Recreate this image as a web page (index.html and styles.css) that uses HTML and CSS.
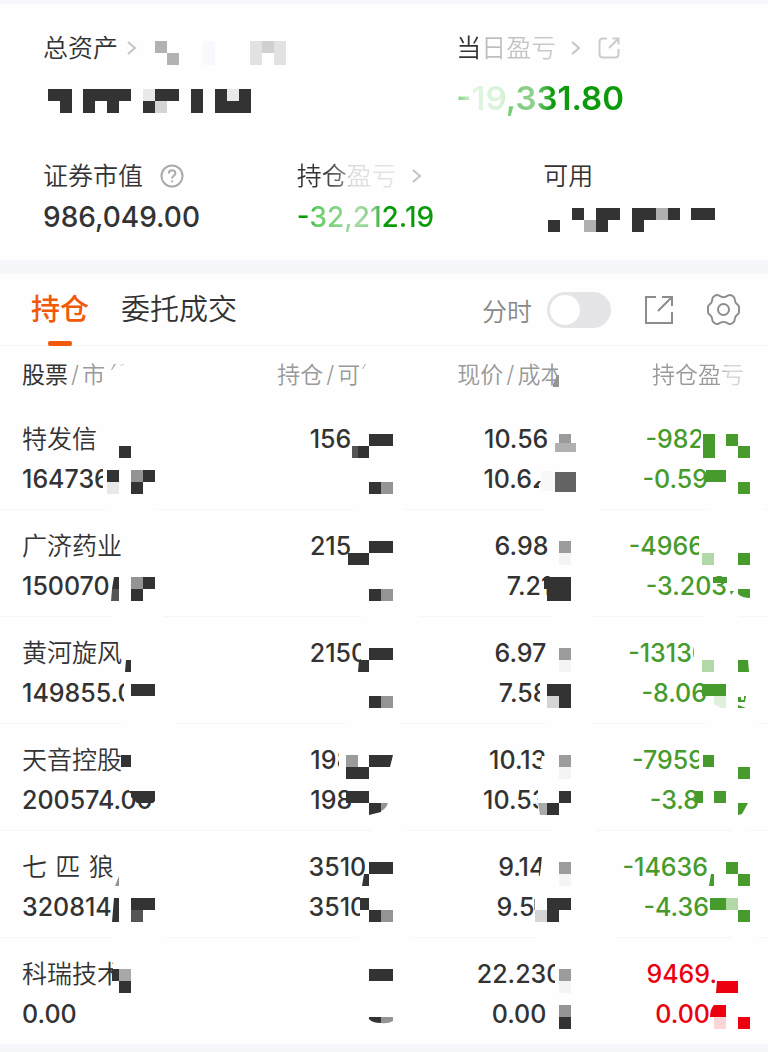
FILE: index.html
```html
<!DOCTYPE html>
<html lang="zh-CN">
<head>
    <meta charset="UTF-8">
    <meta name="viewport" content="width=device-width, initial-scale=1.0">
    <title>持仓</title>
    <link rel="stylesheet" href="styles.css">
</head>
<body>
    <section class="summary">
        <div class="summary-top">
            <div>
                <div class="label">
                    <a href="#">总资产</a>
                    <svg class="arrow" width="8" height="16" viewBox="0 0 8 16"><path d="M0 2l7 6-7 6"/></svg>
                    <svg class="mosaic" width="132" height="30" viewBox="0 0 132 30">
                        <path fill="#b2b2b2" d="M1 8h12v12h12v12h-12v-12h-12z"/>
                        <path fill="#f8f9fd" d="M49 8h12v24h-12z"/>
                        <path fill="#e2e2e2" d="M96 8h36v24h-12v-12h-12v12h-12z"/>
                        <path fill="#d0d0d0" d="M108 8h12v12h-12z"/>
                    </svg>
                </div>
                <div class="value big">
                    <svg class="mosaic" width="208" height="36" viewBox="0 0 208 36">
                        <path class="d" d="M5 9h24v24h-12v-12h-12zM40 9h48v12h-12v12h-12v-12h-12v12h-12zM112 9h24v12h-24zM100 21h12v12h-12zM148 9h12v24h-12zM172 9h12v12h12v-12h12v24h-36z"/>
                        <path class="x" d="M100 9h12v12h-12zM184 9h12v12h-12z"/>
                        <path class="s" d="M112 21h12v12h-12z"/>
                    </svg>
                </div>
            </div>
            <div>
                <div class="label">
                    <a href="#" class="fade-day">当日盈亏</a>
                    <svg class="arrow far" width="8" height="16" viewBox="0 0 8 16"><path d="M0 2l7 6-7 6"/></svg>
                    <button class="icon" aria-label="分享当日盈亏">
                        <svg class="share-small" width="22" height="22" viewBox="0 0 22 22"><path d="M9 1.500H5Q1.500 1.500 1.500 5v12q0 3.500 3.500 3.500h12q3.500 0 3.500-3.500v-5M14.500 1.500h6v6M20 2l-9 9"/></svg>
                    </button>
                </div>
                <div class="value big fade-day-value">-19,331.80</div>
            </div>
        </div>
        <div class="summary-bottom">
            <div>
                <div class="label">
                    <span>证券市值</span>
                    <button class="icon help" aria-label="说明">
                        <svg width="24" height="24" viewBox="0 0 24 24"><circle cx="12" cy="12" r="10.500"/><path d="M8.800 9.500c0-4.300 6.600-4.300 6.600-.3 0 2.500-3.300 2.600-3.300 5.200M12.100 16.500v1.800"/></svg>
                    </button>
                </div>
                <div class="value">986,049.00</div>
            </div>
            <div>
                <div class="label">
                    <a href="#" class="fade-hold">持仓盈亏</a>
                    <svg class="arrow far" width="8" height="16" viewBox="0 0 8 16"><path d="M0 2l7 6-7 6"/></svg>
                </div>
                <div class="value fade-hold-value">-32,212.19</div>
            </div>
            <div>
                <div class="label"><span>可用</span></div>
                <div class="value">
                    <svg class="mosaic" width="174" height="36" viewBox="0 0 174 36">
                        <path class="d" d="M5 21h12v12h-12zM29 9h12v12h-12zM53 9h24v12h-12v12h-12zM89 9h24v12h-12v12h-12zM125 9h12v12h-12zM148 9h24v12h-24z"/>
                        <path fill="#b0b0b0" d="M41 21h12v12h-12zM113 9h12v12h-12z"/>
                    </svg>
                </div>
            </div>
        </div>
    </section>

    <nav class="tabs">
        <a href="#" class="tab active">持仓</a>
        <a href="#" class="tab">委托成交</a>
        <label class="minute" for="minute">分时</label>
        <input type="checkbox" id="minute" class="switch">
        <button class="icon share" aria-label="分享">
            <svg width="30" height="30" viewBox="0 0 30 30"><path d="M12 2H2v26h26V17M18 2h10v9M27 3L14 16"/></svg>
        </button>
        <button class="icon gear" aria-label="设置">
            <svg width="33" height="33" viewBox="0 0 34 34"><circle cx="17" cy="17" r="5.700"/><path d="M14 3.500Q17 5 20 3.500L22 2.400Q24 1.400 26 2.800L27.500 4Q28.600 5 28.600 7Q28.800 10 31 11.500L32 12.300Q33 13 33 15V19Q33 21 32 21.700L31 22.500Q28.800 24 28.600 27Q28.600 29 27.500 30L26 31.200Q24 32.600 22 31.600L20 30.500Q17 29 14 30.500L12 31.600Q10 32.600 8 31.200L6.500 30Q5.400 29 5.400 27Q5.200 24 3 22.500L2 21.700Q1 21 1 19V15Q1 13 2 12.300L3 11.500Q5.200 10 5.400 7Q5.400 5 6.500 4L8 2.800Q10 1.400 12 2.400Z"/></svg>
        </button>
    </nav>

    <table class="holdings">
        <thead>
            <tr>
                <th><div class="line"><b>股票</b><i>/</i>市<svg class="mosaic" width="48" height="40" viewBox="-48 0 48 40"><path class="w" d="M-52 20h6v14h-6z"/><path fill="#aaa" d="M-41 9l-3 6 1 0 4-6zM-32 9l-3 2h1l3-2z"/></svg></div></th>
                <th><div class="line">持仓<i>/</i>可<svg class="mosaic" width="33" height="40" viewBox="-33 0 33 40"><path class="w" d="M-34 20h8v14h-8z"/><path fill="#aaa" d="M-28 9l-3 5h1l3-5z"/></svg></div></th>
                <th><div class="line">现价<i>/</i>成本<svg class="mosaic" width="8" height="40" viewBox="-8 0 8 40"><path class="w" d="M-13 0h14v40h-14z"/><path fill="#949494" d="M-18 29l4-9h2v12h-6z"/></svg></div></th>
                <th><div class="line"><span class="fade-head">持仓盈亏</span><svg class="mosaic" width="6" height="40" viewBox="-6 0 6 40"></svg></div></th>
            </tr>
        </thead>
        <tbody>
            <tr>
                <td>
                    <div class="line name">特发信<svg class="mosaic" width="48" height="40" viewBox="-48 0 48 40"><path class="d" d="M-36 28h12v12h-12z"/></svg></div>
                    <div class="line">164736<svg class="mosaic" width="48" height="40" viewBox="-48 0 48 40"><path class="w" d="M-52 4h12v32h-12zM-49 50h49v4h-49z"/><path class="d" d="M-48 12h12v12h-12zM-12 12h12v12h-12zM-24 24h12v12h-12z"/><path class="x" d="M-48 24h12v12h-12z"/><path class="m" d="M-24 12h12v12h-12z"/></svg></div>
                </td>
                <td>
                    <div class="line">156<svg class="mosaic" width="42" height="40" viewBox="-42 0 42 40"><path class="d" d="M-24 16h24v12h-24zM-35 28h11v12h-11z"/><path class="k" d="M-41 28h6v12h-6z"/></svg></div>
                    <div class="line"><svg class="mosaic" width="24" height="40" viewBox="-24 0 24 40"><path class="w" d="M-40 50h51v4h-51z"/><path class="d" d="M-24 24h12v12h-12z"/><path class="m" d="M-12 24h12v12h-12z"/></svg></div>
                </td>
                <td>
                    <div class="line">10.56<svg class="mosaic" width="23" height="40" viewBox="-23 0 23 40"><path fill="#9b9b9b" d="M-12 16h12v9h-12z"/><path fill="#b0b0b0" d="M-16 25h21v9h-21z"/></svg></div>
                    <div class="line">10.62<svg class="mosaic" width="24" height="40" viewBox="-24 0 24 40"><path class="w" d="M-38 4h16v32h-10v-10l2-3h-8zM-28 50h57v4h-57z"/><path fill="#f8f8f8" d="M-30 13h14v20h-14z"/><path fill="#636363" d="M-16 14h21v20h-21z"/></svg></div>
                </td>
                <td class="down">
                    <div class="line">-982<svg class="mosaic" width="46" height="40" viewBox="-46 0 46 40"><path class="w" d="M-49 4h6v32h-8l2-14z"/><path class="d" d="M-47 16h12v24h-12zM-24 16h12v12h12v12h-12v-12h-12z"/></svg></div>
                    <div class="line">-0.59<svg class="mosaic" width="42" height="40" viewBox="-42 0 42 40"><path class="w" d="M-41 50h55v4h-55z"/><path class="d" d="M-44 12h20v12h-20zM-12 24h12v12h-12z"/></svg></div>
                </td>
            </tr>
            <tr>
                <td>
                    <div class="line name">广济药业</div>
                    <div class="line">150070<svg class="mosaic" width="48" height="40" viewBox="-48 0 48 40"><path class="w" d="M-45 50h54v4h-54z"/><path class="d" d="M-41 12h5v12h-7zM-12 12h12v12h-12zM-24 24h12v12h-12z"/><path class="k" d="M-43 24h7v12h-8z"/><path class="m" d="M-24 12h12v12h-12z"/></svg></div>
                </td>
                <td>
                    <div class="line">215<svg class="mosaic" width="42" height="40" viewBox="-42 0 42 40"><path class="d" d="M-24 16h24v12h-24zM-45 28h21v12h-21z"/></svg></div>
                    <div class="line"><svg class="mosaic" width="24" height="40" viewBox="-24 0 24 40"><path class="w" d="M-32 50h58v4h-58z"/><path class="d" d="M-24 24h12v12h-12z"/><path class="m" d="M-12 24h12v12h-12z"/></svg></div>
                </td>
                <td>
                    <div class="line">6.98<svg class="mosaic" width="23" height="40" viewBox="-23 0 23 40"><path class="g" d="M-12 16h12v12h-12z"/><path class="l" d="M-12 28h12v12h-12z"/></svg></div>
                    <div class="line">7.21<svg class="mosaic" width="20" height="40" viewBox="-20 0 20 40"><path class="w" d="M-20 50h41v4h-41z"/><path class="d" d="M-27 12h27v24h-24v-12h-3z"/></svg></div>
                </td>
                <td class="down">
                    <div class="line">-4966<svg class="mosaic" width="46" height="40" viewBox="-46 0 46 40"><path class="w" d="M-51 4h10v32h-10z"/><path class="p" d="M-48 28h12v12h-12z"/><path class="d" d="M-12 28h12v12h-12z"/></svg></div>
                    <div class="line">-3.203<svg class="mosaic" width="23" height="40" viewBox="-23 0 23 40"><path class="w" d="M-48 50h37v4h-37z"/><path class="d" d="M-37 12h14v6h-14zM-20 26h4l-3 4zM-12 24h12v9q-8 0-12-4z"/></svg></div>
                </td>
            </tr>
            <tr>
                <td>
                    <div class="line name">黄河旋风<svg class="mosaic" width="48" height="40" viewBox="-48 0 48 40"><path class="w" d="M-36 4h6v14h-6z"/><path class="d" d="M-29 28h5v12h-6z"/></svg></div>
                    <div class="line">149855.0<svg class="mosaic" width="48" height="40" viewBox="-48 0 48 40"><path class="w" d="M-31 4h16v32h-16zM-33 50h54v4h-54z"/><path class="d" d="M-24 12h24v12h-24z"/></svg></div>
                </td>
                <td>
                    <div class="line">2150<svg class="mosaic" width="26" height="40" viewBox="-26 0 26 40"><path class="w" d="M-32 4h7v32h-7z"/><path class="d" d="M-24 16h24v12h-24zM-34 28h10v12h-11z"/></svg></div>
                    <div class="line"><svg class="mosaic" width="24" height="40" viewBox="-24 0 24 40"><path class="w" d="M-47 50h54v4h-54z"/><path class="d" d="M-24 24h12v12h-12z"/><path class="m" d="M-12 24h12v12h-12z"/></svg></div>
                </td>
                <td>
                    <div class="line">6.97<svg class="mosaic" width="25" height="40" viewBox="-25 0 25 40"><path class="g" d="M-12 16h12v12h-12z"/><path class="l" d="M-12 28h12v12h-12z"/></svg></div>
                    <div class="line">7.58<svg class="mosaic" width="23" height="40" viewBox="-23 0 23 40"><path class="w" d="M-31 4h9v32h-9zM-25 50h46v4h-46z"/><path class="d" d="M-24 12h24v24h-12v-12h-12z"/><path class="s" d="M-24 24h12v12h-12z"/></svg></div>
                </td>
                <td class="down">
                    <div class="line">-13130<svg class="mosaic" width="42" height="40" viewBox="-42 0 42 40"><path class="w" d="M-56 4h16v32h-16z"/><path class="p" d="M-48 28h12v12h-12z"/><path class="d" d="M-12 28h10l1 12h-11z"/></svg></div>
                    <div class="line">-8.06<svg class="mosaic" width="43" height="40" viewBox="-43 0 43 40"><path class="w" d="M-43 50h51v4h-51z"/><path class="d" d="M-48 12h24v12h-24zM-12 33l8 3h-8zM-12 25h3v3h3v-4h2l-1 6h-7z"/><path class="q" d="M-36 24h12v12h-5l-7-4z"/></svg></div>
                </td>
            </tr>
            <tr>
                <td>
                    <div class="line name">天音控股<svg class="mosaic" width="48" height="40" viewBox="-48 0 48 40"><path class="d" d="M-34 16h10v12h-10z"/></svg></div>
                    <div class="line">200574.00<svg class="mosaic" width="48" height="40" viewBox="-48 0 48 40"><path class="w" d="M-26 4h26v8h-26z"/><path class="d" d="M-24 12h24v10l-2 2h-16l-6-6z"/></svg></div>
                </td>
                <td>
                    <div class="line">198<svg class="mosaic" width="41" height="40" viewBox="-41 0 41 40"><path class="w" d="M-54 4h14v32h-14z"/><path class="d" d="M-24 16h24l-3 12h-21v12h-23v-12h23z"/><path class="g" d="M-47 16h12v12h-12z"/></svg></div>
                    <div class="line">198<svg class="mosaic" width="41" height="40" viewBox="-41 0 41 40"><path class="w" d="M-21 50h34v4h-34z"/><path class="d" d="M-47 12h23v12h12v9l-12 3v-12h-23z"/><path class="m" d="M-12 24h7q-2 6-7 8z"/></svg></div>
                </td>
                <td>
                    <div class="line">10.13<svg class="mosaic" width="25" height="40" viewBox="-25 0 25 40"><path class="w" d="M-29 17h5v12h-7z"/><path class="g" d="M-12 16h12v12h-12z"/><path class="l" d="M-12 28h12v12h-12z"/></svg></div>
                    <div class="line">10.53<svg class="mosaic" width="24" height="40" viewBox="-24 0 24 40"><path class="w" d="M-33 4h10v32h-10zM-21 50h46v4h-46z"/><path class="d" d="M-12 12h12v12h-12v12h-12v-12h12z"/><path fill="#aaaaaa" d="M-33 24h9v12h-7z"/></svg></div>
                </td>
                <td class="down">
                    <div class="line">-7959<svg class="mosaic" width="46" height="40" viewBox="-46 0 46 40"><path class="w" d="M-51 4h10v32h-10z"/><path class="d" d="M-47 16h11v12h-11zM-12 28h12v12h-12z"/></svg></div>
                    <div class="line">-3.8<svg class="mosaic" width="51" height="40" viewBox="-51 0 51 40"><path class="w" d="M-18 50h15v4h-15z"/><path class="d" d="M-55 12h8v12h-8zM-36 12h12v12h-12zM-12 24h10l-6 11-4 1z"/></svg></div>
                </td>
            </tr>
            <tr>
                <td>
                    <div class="line name">七&emsp13;匹&emsp13;狼<svg class="mosaic" width="48" height="40" viewBox="-48 0 48 40"><path class="m" d="M-36 30v10h-4z"/></svg></div>
                    <div class="line">320814<svg class="mosaic" width="48" height="40" viewBox="-48 0 48 40"><path class="w" d="M-44 50h54v4h-54z"/><path class="d" d="M-41 12h5v24h-7zM-24 12h24v12h-24z"/><path class="k" d="M-24 24h12v12h-12z"/></svg></div>
                </td>
                <td>
                    <div class="line">3510<svg class="mosaic" width="27" height="40" viewBox="-27 0 27 40"><path class="d" d="M-24 16h24v12h-24v12h-7l2-12h5z"/></svg></div>
                    <div class="line">3510<svg class="mosaic" width="27" height="40" viewBox="-27 0 27 40"><path class="w" d="M-33 4h9v32h-9zM-36 50h54v4h-54z"/><path class="d" d="M-33 12h9v12h12v12h-12v-12h-9z"/><path class="m" d="M-12 24h12v12h-12z"/></svg></div>
                </td>
                <td>
                    <div class="line">9.14<svg class="mosaic" width="26" height="40" viewBox="-26 0 26 40"><path class="w" d="M-28 4h5v32h-9z"/><path class="g" d="M-12 16h12v12h-12z"/><path class="l" d="M-12 28h12v12h-12z"/></svg></div>
                    <div class="line">9.5<svg class="mosaic" width="37" height="40" viewBox="-37 0 37 40"><path class="w" d="M-37 50h82v4h-82z"/><path class="d" d="M-24 12h24v12h-12v12h-12z"/><path class="s" d="M-36 24h12v12h-12z"/><path class="m" d="M-37 13h1v11h-1z"/></svg></div>
                </td>
                <td class="down">
                    <div class="line">-14636<svg class="mosaic" width="42" height="40" viewBox="-42 0 42 40"><path class="d" d="M-39 28h3v12h-5zM-24 16h12v12h12v12h-12v-12h-12z"/></svg></div>
                    <div class="line">-4.36<svg class="mosaic" width="41" height="40" viewBox="-41 0 41 40"><path class="w" d="M-18 50h27v4h-27z"/><path class="d" d="M-40 12h16v12h-16zM-12 24h12v12h-12z"/><path class="p" d="M-24 12h12v12h-12z"/></svg></div>
                </td>
            </tr>
            <tr>
                <td>
                    <div class="line name">科瑞技术<svg class="mosaic" width="48" height="40" viewBox="-48 0 48 40"><path class="w" d="M-42 4h10v32h-10z"/><path class="d" d="M-43 16h7v12h-7zM-36 28h12v12h-12z"/><path fill="#a8a8a8" d="M-36 16h12v12h-12z"/></svg></div>
                    <div class="line">0.00</div>
                </td>
                <td>
                    <div class="line"><svg class="mosaic" width="24" height="40" viewBox="-24 0 24 40"><path class="d" d="M-24 16h24v12h-24z"/></svg></div>
                    <div class="line"><svg class="mosaic" width="24" height="40" viewBox="-24 0 24 40"><path class="d" d="M-24 24h12v6q-9 0-12-4z"/><path class="m" d="M-12 24h12v4q-5 3-12 2z"/></svg></div>
                </td>
                <td>
                    <div class="line">22.230<svg class="mosaic" width="9" height="40" viewBox="-9 0 9 40"><path class="w" d="M-16 4h16v32h-16z"/><path class="g" d="M-12 16h12v12h-12z"/><path class="l" d="M-12 28h12v12h-12z"/></svg></div>
                    <div class="line">0.00<svg class="mosaic" width="25" height="40" viewBox="-25 0 25 40"><path class="m" d="M-12 12h12v12h-12z"/><path class="d" d="M-12 24h12v12h-12z"/></svg></div>
                </td>
                <td class="up">
                    <div class="line">9469.<svg class="mosaic" width="33" height="40" viewBox="-33 0 33 40"><path class="d" d="M-33 28h21v12h-22z"/></svg></div>
                    <div class="line">0.00<svg class="mosaic" width="40" height="40" viewBox="-40 0 40 40"><path class="d" d="M-36 12h12v12h-16q0-8 4-12zM-12 24h12v12h-12z"/><path class="p" d="M-36 24h12v12h-12z"/></svg></div>
                </td>
            </tr>
        </tbody>
    </table>
</body>
</html>
```
FILE: styles.css
```css
* {
    box-sizing: border-box;
}
body {
    margin: 0;
    font-family: Inter, "Noto Sans CJK SC", sans-serif;
    font-size: 25px;
    color: #333;
    background-color: #f6f7fa;
    padding: 4px 0 8px;
}
a {
    color: inherit;
    text-decoration: none;
}
svg {
    display: block;
    flex: none;
    overflow: visible;
}

/* account summary */
.summary {
    background-color: #fefefe;
    padding: 29px 0 25px 43px;
    margin-bottom: 14px;
}
.summary-top, .summary-bottom {
    display: grid;
    grid-template-columns: 57% 1fr;
}
.summary-bottom {
    grid-template-columns: 35% 34% 1fr;
    margin-top: 45px;
}
.label {
    display: flex;
    align-items: center;
    height: 30px;
    line-height: 30px;
    font-weight: 350;
}
.value {
    height: 36px;
    line-height: 36px;
    margin-top: 8px;
    font-size: 28px;
    font-weight: 500;
}
.summary-top .value {
    margin-top: 17px;
}
.summary-top .big {
    font-size: 33px;
    font-weight: 600;
}
.arrow {
    margin: 0 18px 0 10px;
    fill: none;
    stroke: #c4c4c4;
    stroke-width: 2;
}
.arrow.far {
    margin-left: 16px;
}
.icon {
    border: 0;
    padding: 0;
    background: none;
    cursor: pointer;
    fill: none;
    stroke: #8c8c8c;
    stroke-width: 2;
}
.share-small {
    stroke: #ccc;
}
.help {
    margin-left: 17px;
    stroke: #aaa;
}
.fade-day, .fade-day-value, .fade-hold, .fade-hold-value, .fade-head {
    width: max-content;
    color: transparent;
    -webkit-background-clip: text;
    background-clip: text;
}
.fade-day {
    background-image: linear-gradient(90deg, #333 22%, #bbb 28%, #ccc);
}
.fade-day-value {
    background-image: linear-gradient(90deg, #7c7 0, #e0f5e0 10%, #d8f2d8 28%, #7c7 32%, #8fd08f 46%, #0a9a0a 58%);
}
.fade-hold {
    background-image: linear-gradient(90deg, #333 25%, #777 46%, #ddd 54%, #e4e4e4);
}
.fade-hold-value {
    background-image: linear-gradient(90deg, #0a9a0a 6%, #6c6 14%, #a5dba5 44%, #8c8 56%, #0a9a0a 64%);
}
.fade-head {
    background-image: linear-gradient(90deg, #999 72%, #ddd 85%, #ccc);
}

/* tabs */
.tabs {
    display: flex;
    align-items: center;
    height: 72px;
    padding: 0 28px 0 31px;
    background-color: #fefefe;
    border-bottom: 1px solid #f4f4f6;
}
.tab {
    position: relative;
    margin-right: 32px;
    font-size: 29px;
    font-weight: 350;
    line-height: 72px;
}
.active {
    color: #f05a0a;
    font-weight: 500;
}
.active::after {
    content: "";
    position: absolute;
    left: 17px;
    bottom: 0;
    width: 24px;
    height: 5px;
    border-radius: 2px;
    background-color: #f05a0a;
}
.minute {
    margin-left: auto;
    font-weight: 350;
    color: #888;
}
.switch {
    appearance: none;
    width: 64px;
    height: 36px;
    margin: 0 33px 0 15px;
    padding: 3px;
    border-radius: 18px;
    background-color: #e5e5e7;
}
.switch::before {
    content: "";
    display: block;
    width: 30px;
    height: 30px;
    border-radius: 50%;
    background-color: #fff;
}
.switch:checked::before {
    margin-left: auto;
}
.gear {
    margin-left: 33px;
}

/* holdings */
.holdings {
    width: 100%;
    table-layout: fixed;
    border-spacing: 0;
    background-color: #fefefe;
}
th, td {
    padding: 15px 0 11px;
    border-bottom: 1px solid #f6f6f7;
    font-weight: 500;
}
tbody tr:last-child td {
    border-bottom: 0;
}
th {
    width: 25.2%;
    padding: 9px 0 8px;
    border-bottom: 0;
    font-size: 23px;
    font-weight: 350;
    color: #999;
}
th:first-child {
    width: 26%;
}
th:nth-child(3) {
    width: 23.2%;
}
th:last-child {
    width: 25.6%;
}
th b {
    font-weight: 400;
    color: #333;
}
th i {
    font-style: normal;
    margin: 0 3px;
}
.line {
    display: flex;
    justify-content: flex-end;
    height: 40px;
    line-height: 40px;
}
td .line {
    font-size: 25px;
    line-height: 42px;
}
th:first-child .line, td:first-child .line {
    position: relative;
    justify-content: flex-start;
    width: 133px;
    margin-left: 22px;
}
th:first-child .mosaic, td:first-child .mosaic {
    position: absolute;
    top: 0;
    right: 0;
}
th:last-child, td:last-child {
    padding-right: 18px;
}
td .name {
    font-weight: 350;
}
.down {
    color: #469b2c;
}
.up {
    color: #ec0010;
}

/* mosaic shades */
.d { fill: #333; }
.k { fill: #555; }
.m { fill: #949494; }
.g { fill: #9b9b9b; }
.s { fill: #d5d5d5; }
.x { fill: #e9e9e9; }
.l { fill: #f4f4f4; }
.w { fill: #fefefe; }
.down .d { fill: #469b2c; }
.down .p { fill: #b2d8a8; }
.down .q { fill: #e0f0dc; }
.up .d { fill: #ec0010; }
.up .p { fill: #fbd5d8; }
```
